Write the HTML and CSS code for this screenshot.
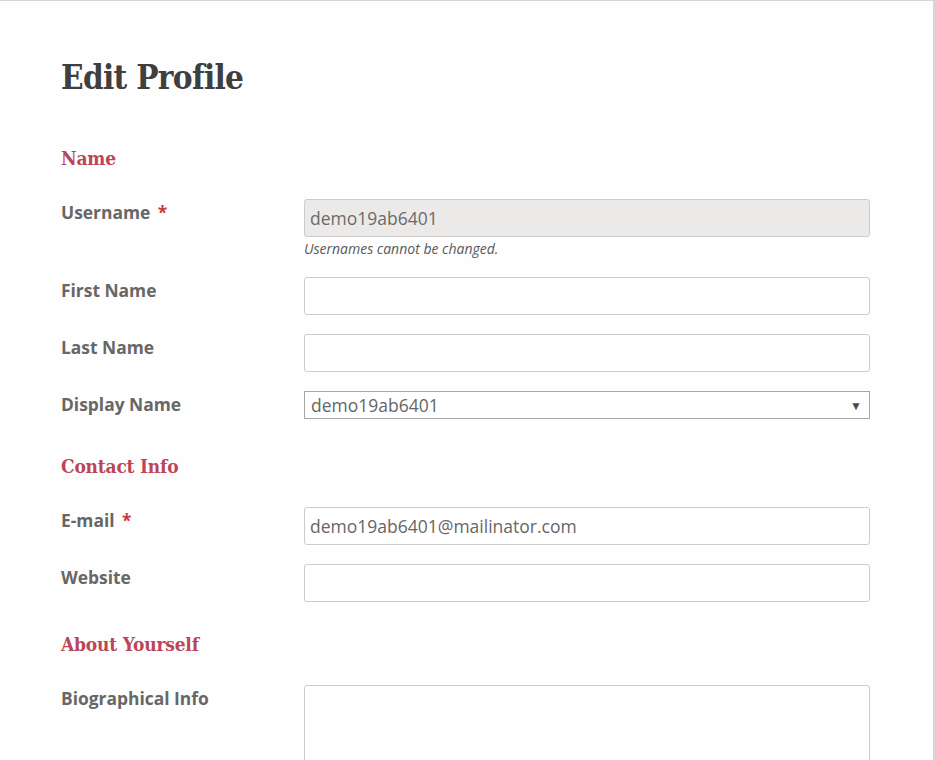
FILE: index.html
```html
<!DOCTYPE html>
<html>
<head>
<meta charset="utf-8">
<link rel="stylesheet" href="styles.css">
</head>
<body>
<div class="page">
  <h1 class="title">Edit Profile</h1>

  <h2 class="section">Name</h2>
  <div class="row">
    <label class="label">Username <span class="req">*</span></label>
    <div class="field">
      <input class="input disabled" type="text" value="demo19ab6401" disabled>
      <div class="help">Usernames cannot be changed.</div>
    </div>
  </div>
  <div class="row">
    <label class="label">First Name</label>
    <div class="field"><input class="input" type="text"></div>
  </div>
  <div class="row">
    <label class="label">Last Name</label>
    <div class="field"><input class="input" type="text"></div>
  </div>
  <div class="row">
    <label class="label">Display Name</label>
    <div class="field field-select">
      <div class="select">
        <span>demo19ab6401</span>
        <span class="arrow">▼</span>
      </div>
    </div>
  </div>

  <h2 class="section">Contact Info</h2>
  <div class="row">
    <label class="label">E-mail <span class="req">*</span></label>
    <div class="field"><input class="input" type="text" value="demo19ab6401@mailinator.com"></div>
  </div>
  <div class="row">
    <label class="label">Website</label>
    <div class="field"><input class="input" type="text"></div>
  </div>

  <h2 class="section">About Yourself</h2>
  <div class="row">
    <label class="label">Biographical Info</label>
    <div class="field"><textarea class="textarea"></textarea></div>
  </div>
</div>
</body>
</html>
```
FILE: styles.css
```css
html, body {
  margin: 0;
  padding: 0;
  background: #fefefe;
}
body {
  border-top: 1px solid #d6d6d6;
  border-right: 2px solid #d6d6d6;
  height: 760px;
  box-sizing: border-box;
  overflow: hidden;
  font-family: "Open Sans", sans-serif;
}
.page {
  padding: 57px 0 0 61px;
  width: 809px;
}
.title {
  font-family: "DejaVu Serif Condensed", "DejaVu Serif", serif;
  font-stretch: condensed;
  font-weight: bold;
  font-size: 33px;
  line-height: 40px;
  color: #3f3f3f;
  margin: 0 0 48px 0;
  letter-spacing: -0.7px;
}
.section {
  font-family: "DejaVu Serif Condensed", "DejaVu Serif", serif;
  font-stretch: condensed;
  font-weight: bold;
  font-size: 19px;
  line-height: 24px;
  color: #bb4658;
  margin: 30px 0 29px 0;
  letter-spacing: -0.2px;
}
.title + .section {
  margin-top: 0;
}
.row {
  display: flex;
  margin-bottom: 19px;
}
.label {
  width: 243px;
  flex: none;
  font-weight: bold;
  font-size: 17.4px;
  color: #676767;
  line-height: 24px;
  padding-top: 1px;
}
.req {
  color: #c43b3b;
  margin-left: 3px;
}
.field {
  width: 566px;
  min-height: 38px;
}
.field-select {
  min-height: 33px;
}
.input {
  display: block;
  box-sizing: border-box;
  width: 566px;
  height: 38px;
  border: 1px solid #cccccc;
  border-radius: 3px;
  background: #ffffff;
  font-family: "Open Sans", sans-serif;
  font-size: 17.5px;
  color: #666666;
  padding: 0 5px;
  margin: 0;
}
.input.disabled {
  background: #ebeae8;
  color: #6a6a6a;
}
.help {
  font-style: italic;
  font-size: 14px;
  color: #595959;
  margin-top: 3px;
  line-height: 18px;
}
.select {
  box-sizing: border-box;
  width: 566px;
  height: 28px;
  border: 1px solid #a6a6a6;
  background: #fff;
  display: flex;
  align-items: center;
  justify-content: space-between;
  padding: 0 7px 0 6px;
  font-size: 17.5px;
  color: #666666;
}
.arrow {
  font-size: 12px;
  color: #4a4a4a;
}
.textarea {
  display: block;
  box-sizing: border-box;
  width: 566px;
  height: 100px;
  border: 1px solid #cccccc;
  border-radius: 3px;
  background: #fff;
  resize: none;
  margin: 0;
}
```
